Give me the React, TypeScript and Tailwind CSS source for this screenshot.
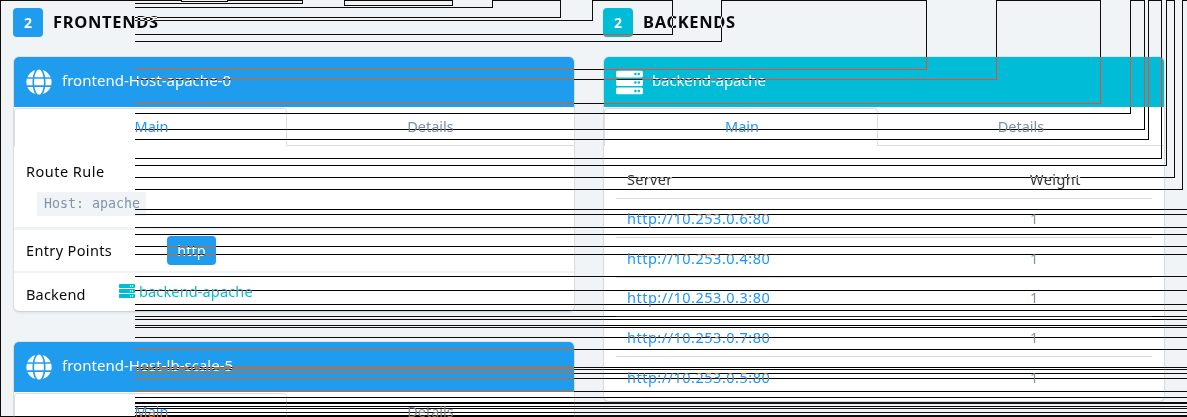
import React from "react";
import { FaGlobe, FaServer } from "react-icons/fa";

const fullLines = [
  209, 214, 227, 234, 246, 254, 276, 290, 304, 310, 316, 319, 325, 327, 337,
  349, 367, 369, 373, 378, 391, 397, 402, 403, 406, 408, 412, 415, 416,
];

const steps = [
  [3, 302], [7, 492], [17, 560], [20, 592], [34, 672], [41, 721], [69, 926],
  [79, 996], [103, 1100], [113, 1130], [129, 1144], [139, 1148], [158, 1161],
  [165, 1166], [177, 1174], [189, 1182],
];

const topEdges = [
  [0, 181], [227, 302], [344, 452], [492, 560], [592, 672], [721, 926],
  [996, 1100], [1130, 1144], [1148, 1161], [1166, 1174], [1182, 1186],
];

function Traces() {
  const d = [
    ...fullLines.map((y) => `M135 ${y}h1052v1h-1052z`),
    ...steps.map(([y, x]) => `M135 ${y}H${x}V1h1V${y + 1}H135z`),
    ...topEdges.map(([a, b]) => `M${a} 0H${b + 1}v1H${a}z`),
    "M181 1H228v1H181z",
    "M344 1h1v4h107V1h1v5H344z",
    "M0 1h1v416H0z",
    "M1 416h134v1H1z",
  ].join("");
  return (
    <svg className="pointer-events-none absolute inset-0 mix-blend-difference" width="1187" height="417" shapeRendering="crispEdges" aria-hidden="true">
      <path d={d} fill="#fff" />
    </svg>
  );
}

function Title({ color, children }: { color: string; children: string }) {
  return (
    <div className="flex h-[29px] items-center">
      <span className={`flex h-[29px] w-[30px] items-center justify-center rounded-[4px] text-[14px] font-bold text-white ${color}`}>2</span>
      <h2 className="ml-[10px] text-[16.5px] font-bold tracking-[0.68px] text-[#0a0a0a]">{children}</h2>
    </div>
  );
}

function Card({ kind, name, className, children }: { kind: "front" | "back"; name: string; className: string; children?: React.ReactNode }) {
  const front = kind === "front";
  return (
    <section className={`w-[560px] shrink-0 overflow-hidden rounded-[5px] bg-white shadow-[0_0_0_1px_rgba(10,10,10,0.07),0_2px_3px_rgba(10,10,10,0.08)] ${className}`}>
      <header className={`flex h-[50px] items-center pl-[12px] text-[15px] text-white ${front ? "bg-[#209cee]" : "bg-[#00bcd6]"}`}>
        {front ? <FaGlobe className="size-[26px]" /> : <FaServer className="size-[27px]" />}
        <span className={`-mt-[4px] ${front ? "ml-[10px] tracking-[0.02px]" : "ml-[9px] tracking-[-0.13px]"}`}>{name}</span>
      </header>
      <div className="mt-px flex h-[38px] text-[14.5px]">
        <div className={`flex items-center justify-center rounded-t-[4px] border border-b-0 border-[#dbdfe1] pb-[2px] pl-[2px] text-[#1b96ff] ${front ? "w-[273px]" : "w-[274px]"}`}>Main</div>
        <div className="flex flex-1 items-center justify-center border-b border-[#dbdbdb] text-[#7c8faa]">Details</div>
      </div>
      {children}
    </section>
  );
}

const servers = ["6", "4", "3", "7", "5"];

export default function App() {
  return (
    <main className="relative isolate h-[417px] w-[1187px] overflow-hidden bg-[#f0f4f7] font-['Noto_Sans',sans-serif]">
      <div className="flex">
        <div className="ml-[13px] w-[590px] pt-[8px]">
          <Title color="bg-[#209cee]">FRONTENDS</Title>
          <Card kind="front" name="frontend-Host-apache-0" className="ml-px mt-[20px] h-[254px]">
            <div className="flex h-[84px] flex-col border-b-[3px] border-[#f0f4f7] pl-[12px] pt-[14px] text-[14.5px] text-[#0a0a0a]">
              <div className="leading-[22px] tracking-[0.48px]">Route Rule</div>
              <code className="ml-[11px] mt-[10px] h-[24px] w-[109px] bg-[#f0f4f7] pl-[7px] font-['DejaVu_Sans_Mono',monospace] text-[13.3px] leading-[24px] text-[#8093ac]">Host: apache</code>
            </div>
            <div className="flex h-[43px] items-center border-b-2 border-[#f0f4f7] pl-[12px] text-[14.5px] text-[#0a0a0a]">
              <span className="w-[141px] tracking-[0.36px]">Entry Points</span>
              <span className="flex h-[29px] w-[49px] items-center justify-center rounded-[4px] bg-[#209cee] tracking-[0.1px] text-white">http</span>
            </div>
            <div className="flex h-[38px] items-center pl-[12px] pt-[6px] text-[14.5px] text-[#0a0a0a]">
              <span className="w-[93px] tracking-[0.2px]">Backend</span>
              <FaServer className="-mt-[9px] size-[16px] text-[#00bcd6]" />
              <span className="-mt-[7px] ml-[4px] tracking-[0.14px] text-[#00bcd6]">backend-apache</span>
            </div>
          </Card>
          <Card kind="front" name="frontend-Host-lb-scale-5" className="ml-px mt-[31px] h-[254px]" />
        </div>
        <div className="pt-[8px]">
          <Title color="bg-[#00bcd6]">BACKENDS</Title>
          <Card kind="back" name="backend-apache" className="ml-px mt-[20px] h-[344px]">
            <table className="ml-[12px] mt-[14px] w-[536px] table-fixed border-collapse text-left text-[14.5px]">
              <thead className="text-[#363636]">
                <tr className="h-[38px] border-b border-[#dbdbdb]">
                  <th className="w-[403px] pl-[11px] pt-[2px] font-normal tracking-[0.3px]">Server</th>
                  <th className="pl-[11px] pt-[2px] font-normal tracking-[0.45px]">Weight</th>
                </tr>
              </thead>
              <tbody className="text-[#8093ac]">
                {servers.map((s) => (
                  <tr key={s} className="h-[39.5px] border-b border-[#dbdbdb] last:border-0">
                    <td className="pl-[11px] pt-[3px] tracking-[0.5px] text-[#1b96ff]">http://10.253.0.{s}:80</td>
                    <td className="pl-[11px] pt-[3px]">1</td>
                  </tr>
                ))}
              </tbody>
            </table>
          </Card>
        </div>
      </div>
      <Traces />
    </main>
  );
}
